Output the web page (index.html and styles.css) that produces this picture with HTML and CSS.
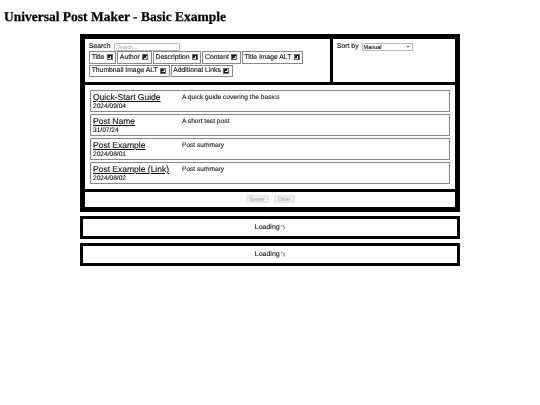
FILE: index.html
```html
<!DOCTYPE html>
<html lang="en">
<head>
<meta charset="utf-8">
<title>Universal Post Maker - Basic Example</title>
<link rel="stylesheet" href="styles.css">
</head>
<body>
<h1 class="page-title">Universal Post Maker - Basic Example</h1>
<main class="maker">
  <section class="main-box">
    <div class="controls">
      <div class="filters">
        <div class="search-row">
          <label class="search-label" for="search">Search</label>
          <input class="search-input" id="search" type="text" placeholder="Search...">
        </div>
        <div class="chips">
          <label class="chip">Title <input class="check" type="checkbox" checked></label>
          <label class="chip">Author <input class="check" type="checkbox" checked></label>
          <label class="chip">Description <input class="check" type="checkbox" checked></label>
          <label class="chip">Content <input class="check" type="checkbox" checked></label>
          <label class="chip">Title Image ALT <input class="check" type="checkbox" checked></label>
          <label class="chip">Thumbnail Image ALT <input class="check" type="checkbox" checked></label>
          <label class="chip">Additional Links <input class="check" type="checkbox" checked></label>
        </div>
      </div>
      <div class="sort">
        <label class="sort-label" for="sort">Sort by</label>
        <select class="sort-select" id="sort"><option>Manual</option></select>
      </div>
    </div>
    <div class="posts">
      <article class="post">
        <div class="post-head"><a class="post-title" href="#">Quick-Start Guide</a><div class="post-date">2024/09/04</div></div>
        <p class="post-summary">A quick guide covering the basics</p>
      </article>
      <article class="post">
        <div class="post-head"><a class="post-title" href="#">Post Name</a><div class="post-date">31/07/24</div></div>
        <p class="post-summary">A short test post</p>
      </article>
      <article class="post">
        <div class="post-head"><a class="post-title" href="#">Post Example</a><div class="post-date">2024/08/01</div></div>
        <p class="post-summary">Post summary</p>
      </article>
      <article class="post">
        <div class="post-head"><a class="post-title" href="#">Post Example (Link)</a><div class="post-date">2024/08/02</div></div>
        <p class="post-summary">Post summary</p>
      </article>
    </div>
    <div class="pager">
      <button class="page-btn" disabled>Newer</button>
      <button class="page-btn" disabled>Older</button>
    </div>
  </section>
  <section class="loading-box">Loading<svg class="spinner" viewBox="0 0 10 10" aria-hidden="true"><path d="M1.5 2.5A4 4 0 0 1 8.5 3.5A4 4 0 0 1 6 9" fill="none" stroke="#444" stroke-width="1.4"/></svg></section>
  <section class="loading-box">Loading<svg class="spinner" viewBox="0 0 10 10" aria-hidden="true"><path d="M1.5 2.5A4 4 0 0 1 8.5 3.5A4 4 0 0 1 6 9" fill="none" stroke="#444" stroke-width="1.4"/></svg></section>
</main>
</body>
</html>
```
FILE: styles.css
```css
html { background: #fff; }
body { margin: 0; padding: 0 0 100px; background: #fff; font-family: "Liberation Sans", Arial, sans-serif; color: #000; text-rendering: geometricPrecision; filter: grayscale(1) blur(0.2px); -webkit-text-stroke: 0.12px currentColor; }
.page-title {
  font-family: "Liberation Serif", "Times New Roman", serif;
  font-size: 13.5px; line-height: 16px; font-weight: bold;
  margin: 0; padding: 9px 0 0 4px; color: #000;
  -webkit-text-stroke: 0.25px #000;
}
.maker { width: 380px; margin: 9px 0 0 80px; display: flex; flex-direction: column; gap: 4px; }
.main-box { background: #000; border: 5px solid #000; display: flex; flex-direction: column; gap: 3px; }
.controls { display: flex; gap: 3px; height: 43px; }
.filters { width: 245px; background: #fff; padding: 3.5px 0 0 4px; box-sizing: border-box; }
.search-row { display: flex; align-items: center; gap: 3px; height: 8px; margin-bottom: 0.8px; }
.search-label { font-size: 6.8px; color: #111; }
.search-input { width: 66px; height: 8px; box-sizing: border-box; font: 5.2px "Liberation Sans", sans-serif; border: 1px solid #bbb; border-radius: 1px; padding: 0 2px; margin: 0; }
.search-input::placeholder { color: #bbb; }
.chips { display: flex; flex-wrap: wrap; gap: 1px; }
.chip { display: flex; align-items: center; gap: 2.5px; height: 12.4px; box-sizing: border-box; border: 1px solid #888; padding: 0 2.4px 0 1.7px; font-size: 6.8px; color: #111; white-space: nowrap; }
.check { appearance: none; width: 6px; height: 6px; margin: 0; background: #222; border: 1px solid #666; box-sizing: border-box; display: grid; place-items: center; }
.check::after { content: ""; width: 2px; height: 2px; border-right: 1px solid #ddd; border-bottom: 1px solid #ddd; }
.sort { flex: 1; background: #fff; padding: 3.5px 0 0 4px; display: flex; align-items: flex-start; gap: 3px; }
.sort-label { font-size: 6.8px; line-height: 8px; color: #111; }
.sort-select { appearance: none; width: 51px; height: 8px; box-sizing: border-box; font: 5.5px "Liberation Sans", sans-serif; padding: 0 0 0 1px; margin: 0; border: 1px solid #bbb; background: #fff url("data:image/svg+xml,%3Csvg xmlns='http://www.w3.org/2000/svg' viewBox='0 0 6 4'%3E%3Cpath d='M1 1l2 2 2-2' fill='none' stroke='%23222' stroke-width='1.2'/%3E%3C/svg%3E") no-repeat right 2px center / 4px 3px; color: #111; }
.posts { background: #fff; padding: 5px; display: flex; flex-direction: column; gap: 2.5px; }
.post { display: flex; height: 21.5px; box-sizing: border-box; border: 1px solid #888; padding: 0 2px; }
.post-head { width: 89px; padding-top: 1px; }
.post-title { display: block; font-size: 8.5px; line-height: 10px; color: #111; text-decoration: underline; white-space: nowrap; }
.post-date { font-size: 6.6px; line-height: 7px; margin-top: 0.7px; color: #111; }
.post-summary { margin: 0; padding-top: 1.5px; font-size: 6.6px; line-height: 9px; color: #222; }
.pager { background: #fff; height: 15.5px; display: flex; justify-content: center; align-items: center; gap: 5px; }
.page-btn { height: 8px; box-sizing: border-box; width: 23px; padding: 0; font: 5.2px "Liberation Sans", sans-serif; color: #aaa; background: #eee; border: 1px solid #e4e4e4; border-radius: 1px; -webkit-text-stroke: 0; }
.page-btn + .page-btn { width: 21px; }
.loading-box { height: 23px; box-sizing: border-box; border: 3.5px solid #000; display: flex; align-items: center; justify-content: center; font-size: 7px; color: #111; background: #fff; }
.spinner { width: 5px; height: 5px; margin-left: 0.5px; }
```
